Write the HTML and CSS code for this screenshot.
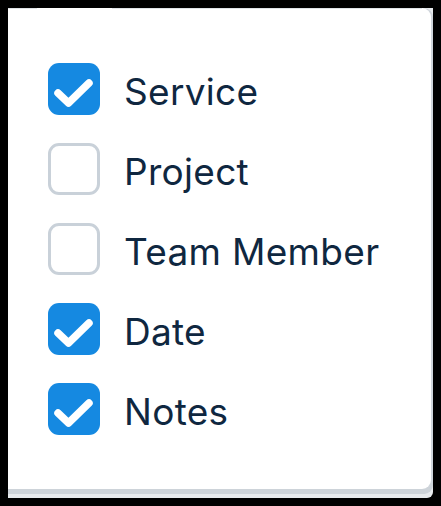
FILE: index.html
```html
<!DOCTYPE html>
<html lang="en">

<head>
    <meta charset="UTF-8">
    <meta name="viewport" content="width=device-width, initial-scale=1.0">
    <title>Columns</title>
    <link rel="stylesheet" href="styles.css">
</head>

<body>
    <div class="panel">
        <div class="dropdown">
            <div class="top-edge">
                <span class="edge-line edge-left"></span>
                <span class="edge-gap"></span>
                <span class="edge-line edge-right"></span>
            </div>
            <ul class="column-list">
                <li class="column-item">
                    <span class="box checked">
                        <svg viewBox="0 0 52 52" width="52" height="52"><path d="M10 30 L20.5 40 L41 20" /></svg>
                    </span>
                    <span class="label">Service</span>
                </li>
                <li class="column-item">
                    <span class="box"></span>
                    <span class="label">Project</span>
                </li>
                <li class="column-item">
                    <span class="box"></span>
                    <span class="label">Team Member</span>
                </li>
                <li class="column-item">
                    <span class="box checked">
                        <svg viewBox="0 0 52 52" width="52" height="52"><path d="M10 30 L20.5 40 L41 20" /></svg>
                    </span>
                    <span class="label">Date</span>
                </li>
                <li class="column-item">
                    <span class="box checked">
                        <svg viewBox="0 0 52 52" width="52" height="52"><path d="M10 30 L20.5 40 L41 20" /></svg>
                    </span>
                    <span class="label">Notes</span>
                </li>
            </ul>
        </div>
    </div>
</body>

</html>
```
FILE: styles.css
```css
html,
body {
    margin: 0;
    background-color: #000;
}

body {
    padding: 8px;
    font-family: Inter, "Liberation Sans", Arial, sans-serif;
}

.panel {
    width: 425px;
    height: 490px;
    background-color: #e7eaed;
    border-radius: 0 0 6px 0;
}

.dropdown {
    width: 423px;
    height: 481px;
    background-color: #fff;
    border-radius: 0 9px 9px 0;
    box-shadow: 2px 0 0 #cfd5db, 0 5px 0 #cdd3d9, 2px 5px 0 #cdd3d9;
}

.top-edge {
    display: flex;
    height: 1px;
}

.edge-line {
    background-color: #dfe3e7;
}

.edge-left {
    width: 29px;
}

.edge-gap {
    width: 75px;
}

.edge-right {
    width: 310px;
}

.column-list {
    list-style: none;
    margin: 0;
    padding: 54px 0 0 40px;
    display: flex;
    flex-direction: column;
    gap: 28px;
}

.column-item {
    display: flex;
    align-items: center;
    gap: 24px;
    height: 52px;
}

.box {
    width: 52px;
    height: 52px;
    box-sizing: border-box;
    border: 3px solid #c9d1d9;
    border-radius: 11px;
    flex-shrink: 0;
}

.box.checked {
    border: none;
    background-color: #1589e1;
}

.box svg {
    display: block;
}

.box svg path {
    fill: none;
    stroke: #fff;
    stroke-width: 7.5;
    stroke-linecap: round;
    stroke-linejoin: round;
}

.label {
    padding-top: 4px;
    font-size: 37px;
    letter-spacing: 0.3px;
    color: #0f2740;
}
```
